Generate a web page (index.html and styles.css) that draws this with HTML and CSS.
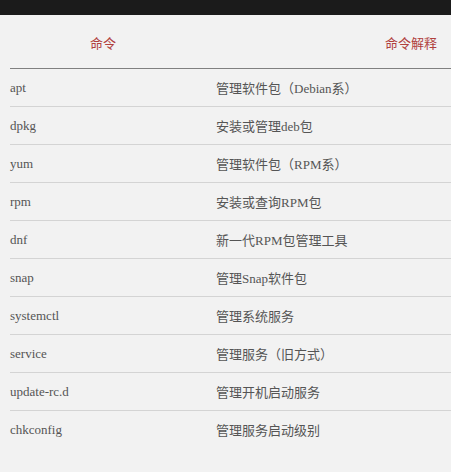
FILE: index.html
```html
<!DOCTYPE html>
<html>
<head>
<meta charset="utf-8">
<link rel="stylesheet" href="styles.css">
</head>
<body>
<div class="topbar"></div>
<table class="cmd-table">
  <thead>
    <tr><th class="h-cmd">命令</th><th class="h-desc">命令解释</th></tr>
  </thead>
  <tbody>
    <tr><td>apt</td><td>管理软件包（Debian系）</td></tr>
    <tr><td>dpkg</td><td>安装或管理deb包</td></tr>
    <tr><td>yum</td><td>管理软件包（RPM系）</td></tr>
    <tr><td>rpm</td><td>安装或查询RPM包</td></tr>
    <tr><td>dnf</td><td>新一代RPM包管理工具</td></tr>
    <tr><td>snap</td><td>管理Snap软件包</td></tr>
    <tr><td>systemctl</td><td>管理系统服务</td></tr>
    <tr><td>service</td><td>管理服务（旧方式）</td></tr>
    <tr><td>update-rc.d</td><td>管理开机启动服务</td></tr>
    <tr class="last"><td>chkconfig</td><td>管理服务启动级别</td></tr>
  </tbody>
</table>
</body>
</html>
```
FILE: styles.css
```css
html, body {
  margin: 0;
  padding: 0;
  background: #f2f2f2;
}
body {
  font-family: "Liberation Serif", "Noto Sans CJK SC", serif;
  font-size: 13px;
  color: #555;
}
.topbar {
  height: 15px;
  background: #1b1b1b;
}
.cmd-table {
  margin-left: 10px;
  width: calc(100% - 10px);
  border-collapse: collapse;
}
.cmd-table th {
  font-weight: normal;
  color: #b0403d;
  height: 52px;
  padding: 0;
  border-bottom: 1px solid #808080;
  vertical-align: middle;
  padding-top: 1px;
}
.cmd-table .h-cmd {
  width: 186px;
  padding-right: 20px;
  text-align: center;
}
.cmd-table .h-desc {
  text-align: right;
  padding-right: 14px;
}
.cmd-table td {
  height: 37px;
  padding: 0;
  border-bottom: 1px solid #d4d4d4;
  vertical-align: middle;
}
.cmd-table tr.last td {
  border-bottom: none;
}
```
